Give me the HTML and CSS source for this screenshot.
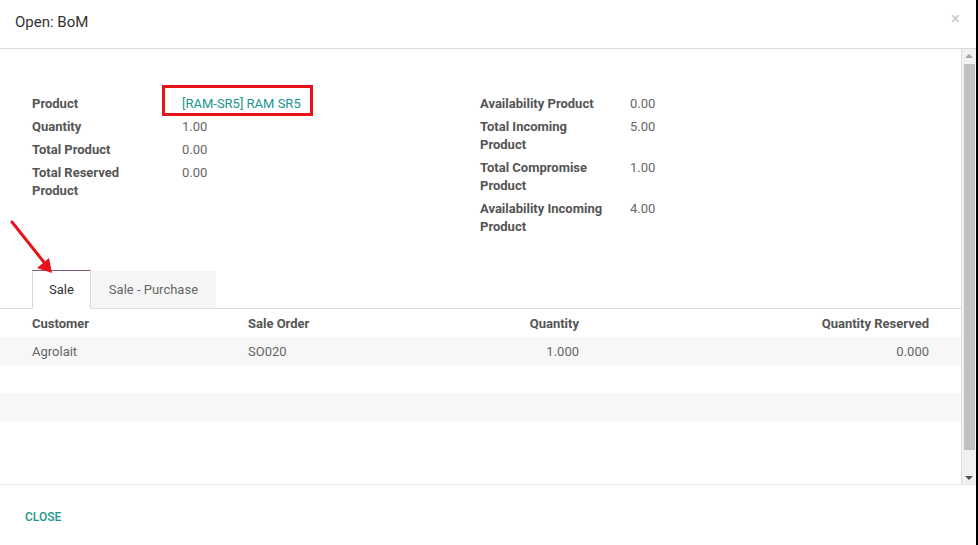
FILE: index.html
```html
<!DOCTYPE html>
<html>
<head>
<meta charset="utf-8">
<link rel="stylesheet" href="styles.css">
</head>
<body>
<div class="modal">
  <header class="m-head">
    <h4 class="m-title">Open: BoM</h4>
    <span class="m-close">×</span>
  </header>
  <div class="m-body">
    <div class="m-content">
      <div class="groups">
        <div class="group">
          <div class="lbl">Product</div><div class="val"><a class="link">[RAM-SR5] RAM SR5</a></div>
          <div class="lbl">Quantity</div><div class="val">1.00</div>
          <div class="lbl">Total Product</div><div class="val">0.00</div>
          <div class="lbl">Total Reserved Product</div><div class="val">0.00</div>
        </div>
        <div class="group">
          <div class="lbl">Availability Product</div><div class="val">0.00</div>
          <div class="lbl">Total Incoming Product</div><div class="val">5.00</div>
          <div class="lbl">Total Compromise Product</div><div class="val">1.00</div>
          <div class="lbl">Availability Incoming Product</div><div class="val">4.00</div>
        </div>
      </div>
      <ul class="tabs">
        <li class="tab tab-active">Sale</li>
        <li class="tab tab-idle">Sale - Purchase</li>
      </ul>
      <table class="list">
        <colgroup><col class="c1"><col class="c2"><col class="c3"><col class="c4"></colgroup>
        <thead>
          <tr><th class="first">Customer</th><th>Sale Order</th><th class="num">Quantity</th><th class="num last">Quantity Reserved</th></tr>
        </thead>
        <tbody>
          <tr class="odd"><td class="first">Agrolait</td><td>SO020</td><td class="num">1.000</td><td class="num last">0.000</td></tr>
          <tr><td class="first">&nbsp;</td><td></td><td></td><td class="last"></td></tr>
          <tr class="odd"><td class="first">&nbsp;</td><td></td><td></td><td class="last"></td></tr>
          <tr><td class="first">&nbsp;</td><td></td><td></td><td class="last"></td></tr>
        </tbody>
      </table>
    </div>
    <div class="scrollbar">
      <div class="sb-btn"><span class="tri-up"></span></div>
      <div class="sb-track"><div class="sb-thumb"></div></div>
      <div class="sb-btn"><span class="tri-down"></span></div>
    </div>
  </div>
  <footer class="m-foot"><span class="btn-close">CLOSE</span></footer>

  <div class="annot-box"></div>
  <svg class="annot-arrow" width="60" height="60" viewBox="0 0 60 60">
    <line x1="12" y1="2" x2="47" y2="46" stroke="#e8141b" stroke-width="3" stroke-linecap="round"/>
    <polygon points="52,53 37,48 49,38" fill="#e8141b"/>
  </svg>
</div>
</body>
</html>
```
FILE: styles.css
```css
* { box-sizing: border-box; }
html, body { margin: 0; padding: 0; background: #fff; }
body { font-family: Roboto, "Noto Sans", sans-serif; font-size: 13px; color: #666; }

.modal {
  position: relative;
  width: 978px;
  height: 545px;
  border-right: 2px solid #000;
  display: flex;
  flex-direction: column;
  overflow: hidden;
}

.m-head {
  height: 49px;
  flex: 0 0 49px;
  border-bottom: 1px solid #dadada;
  display: flex;
  align-items: center;
  justify-content: space-between;
  padding: 0 16px 4px 15px;
}
.m-title { margin: 0; font-size: 15px; font-weight: 400; color: #333; line-height: 18px; }
.m-close { color: #c4c4c4; font-size: 17px; line-height: 18px; margin-top: -8px; }

.m-body { flex: 0 0 435px; display: flex; }
.m-content { width: 961px; flex: 0 0 961px; }

.groups {
  display: grid;
  grid-template-columns: 448px 448px;
  padding: 46px 0 0 32px;
  align-items: start;
}
.group {
  display: grid;
  grid-template-columns: 150px 1fr;
  row-gap: 5px;
  line-height: 18px;
}
.lbl { font-weight: 700; color: #555; padding-right: 20px; }
.val { color: #666; }
.link { color: #1b958f; text-decoration: none; }

.tabs {
  list-style: none;
  margin: 34px 0 0;
  padding: 0 0 0 32px;
  display: flex;
  border-bottom: 1px solid #dcdcdc;
}
.tab {
  line-height: 18px;
  padding: 10px 16px 9px;
  margin-bottom: -1px;
  border: 1px solid transparent;
}
.tab-active {
  background: #fff;
  color: #333;
  border-color: #7c5a7b #d6d6d6 #fff #d6d6d6;
}
.tab-idle {
  background: #f6f6f6;
  background-clip: padding-box;
  color: #666;
  padding: 10px 18px 9px 18px;
  border-bottom-color: #dcdcdc;
  border-left: 0;
}

.list { border-collapse: collapse; table-layout: fixed; width: 961px; }
.c1 { width: 248px; } .c2 { width: 200px; } .c3 { width: 131px; } .c4 { width: 382px; }
.list th, .list td { height: 28px; padding: 2px 0 0; text-align: left; line-height: 18px; white-space: nowrap; }
.list th { font-weight: 700; color: #555; }
.list thead tr { box-shadow: 0 2px 3px rgba(0,0,0,0.07); }
.list td { color: #666; }
.list .first { padding-left: 32px; }
.list .last { padding-right: 32px; }
.list .num { text-align: right; }
.list tr.odd td { background: #f7f7f7; }

.scrollbar {
  width: 15px;
  flex: 0 0 15px;
  border-left: 1px solid #dedede;
  background: #f1f1f1;
  display: flex;
  flex-direction: column;
}
.sb-btn { height: 15px; flex: 0 0 15px; display: flex; align-items: center; justify-content: center; }
.sb-track { flex: 1; padding: 0 1px 0 2px; }
.sb-thumb { height: 386px; background: #c1c1c1; }
.tri-up { width: 0; height: 0; border-left: 4px solid transparent; border-right: 4px solid transparent; border-bottom: 4px solid #a3a3a3; margin-top: -1px; }
.tri-down { width: 0; height: 0; border-left: 4px solid transparent; border-right: 4px solid transparent; border-top: 4px solid #505050; margin-top: 2px; }

.m-foot {
  flex: 1;
  border-top: 1px solid #e5e5e5;
  display: flex;
  align-items: center;
  padding: 3px 0 0 25px;
}
.btn-close { color: #1b958f; font-size: 12px; font-weight: 500; line-height: 14px; }

.annot-box {
  position: absolute;
  left: 162px;
  top: 85px;
  width: 151px;
  height: 31px;
  border: 3px solid #e8141b;
}
.annot-arrow { position: absolute; left: 0; top: 220px; }
```
